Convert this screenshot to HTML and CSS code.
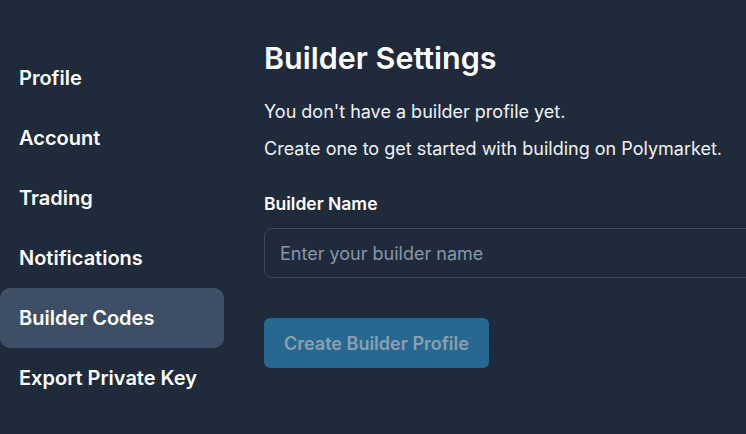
FILE: index.html
```html
<!DOCTYPE html>
<html lang="en">

<head>
    <meta charset="UTF-8">
    <meta name="viewport" content="width=device-width, initial-scale=1.0">
    <title>Builder Settings</title>
    <link rel="stylesheet" href="styles.css">
</head>

<body>
    <div class="layout">
        <nav class="sidebar">
            <a class="nav-item" href="#">Profile</a>
            <a class="nav-item" href="#">Account</a>
            <a class="nav-item" href="#">Trading</a>
            <a class="nav-item" href="#">Notifications</a>
            <a class="nav-item active" href="#">Builder Codes</a>
            <a class="nav-item" href="#">Export Private Key</a>
        </nav>
        <main class="content">
            <h1>Builder Settings</h1>
            <p class="intro">You don't have a builder profile yet.</p>
            <p class="intro">Create one to get started with building on Polymarket.</p>
            <div class="form-group">
                <label for="builder-name">Builder Name</label>
                <input type="text" id="builder-name" placeholder="Enter your builder name">
            </div>
            <button class="btn" disabled>Create Builder Profile</button>
        </main>
    </div>
</body>

</html>
```

FILE: styles.css
```css
body {
    font-family: Inter, "Liberation Sans", sans-serif;
    background-color: #1f2a3a;
    color: #fff;
    margin: 0;
    padding: 0;
    overflow: hidden;
}

.layout {
    display: flex;
    gap: 40px;
}

.sidebar {
    width: 224px;
    flex-shrink: 0;
    padding-top: 48px;
    display: flex;
    flex-direction: column;
}

.nav-item {
    display: flex;
    align-items: center;
    height: 60px;
    padding-left: 19px;
    border-radius: 10px;
    color: #fff;
    text-decoration: none;
    font-size: 20px;
    font-weight: 600;
}

.nav-item.active {
    background-color: #3e4f65;
}

.content {
    flex: 1;
    padding-top: 38px;
    min-width: 0;
    overflow: hidden;
}

h1 {
    margin: 0 0 22px;
    font-size: 30.5px;
    font-weight: 600;
    line-height: 40px;
}

.intro {
    margin: 0 0 13px;
    font-size: 18px;
    line-height: 24px;
    color: #f0f3f6;
}

.form-group {
    margin-top: 32px;
}

.form-group label {
    display: block;
    font-size: 17.5px;
    font-weight: 600;
    line-height: 22px;
    margin-bottom: 13px;
}

.form-group input {
    box-sizing: border-box;
    width: 520px;
    height: 50px;
    padding: 0 15px;
    background-color: transparent;
    border: 1px solid #3a4a5f;
    border-radius: 8px;
    font-family: inherit;
    font-size: 18px;
    color: #fff;
}

.form-group input::placeholder {
    color: #8797ab;
}

.btn {
    margin-top: 40px;
    height: 50px;
    padding: 0 20px;
    background-color: #266890;
    color: #8aa0b2;
    border: none;
    border-radius: 6px;
    font-family: inherit;
    font-size: 18px;
    font-weight: 600;
}
```
